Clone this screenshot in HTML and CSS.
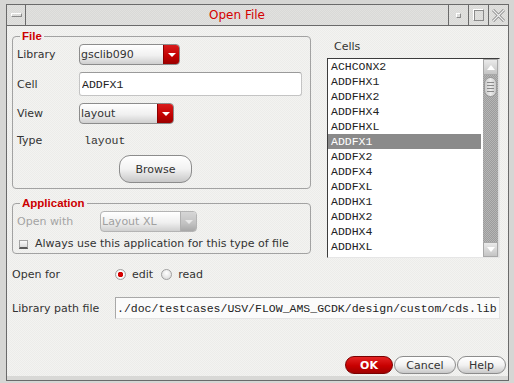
FILE: index.html
```html
<!DOCTYPE html>
<html lang="en">
<head>
    <meta charset="UTF-8"/>
    <title>Open File</title>
    <link rel="stylesheet" href="styles.css">
</head>
<body>

<div class="window">
    <div class="titlebar">
        <div class="tb-menu"><span class="tb-dash"></span></div>
        <div class="tb-title">Open File</div>
        <div class="tb-btn"><span class="tb-dot"></span></div>
        <div class="tb-btn"><span class="tb-square"></span></div>
        <div class="tb-btn">
            <svg width="13" height="13" viewBox="0 0 13 13">
                <path d="M1 1 L12 12 M12 1 L1 12" stroke="#8a8a8a" stroke-width="3" fill="none"/>
                <path d="M1 1 L12 12 M12 1 L1 12" stroke="#eeeeee" stroke-width="1.2" fill="none"/>
            </svg>
        </div>
    </div>

    <div class="content">
        <div class="main">
            <div class="left">
                <fieldset class="group file-group">
                    <legend>File</legend>
                    <div class="frow">
                        <span class="flabel">Library</span>
                        <div class="combo lib-combo">
                            <span class="combo-text">gsclib090</span>
                            <span class="combo-btn"></span>
                        </div>
                    </div>
                    <div class="frow cell-row">
                        <span class="flabel">Cell</span>
                        <input class="field cell-field" value="ADDFX1"/>
                    </div>
                    <div class="frow view-row">
                        <span class="flabel">View</span>
                        <div class="combo view-combo">
                            <span class="combo-text">layout</span>
                            <span class="combo-btn"></span>
                        </div>
                    </div>
                    <div class="frow type-row">
                        <span class="flabel">Type</span>
                        <span class="mono type-value">layout</span>
                    </div>
                    <button class="btn browse-btn">Browse</button>
                </fieldset>

                <fieldset class="group app-group">
                    <legend>Application</legend>
                    <div class="frow">
                        <span class="flabel app-label disabled">Open with</span>
                        <div class="combo app-combo off">
                            <span class="combo-text">Layout XL</span>
                            <span class="combo-btn"></span>
                        </div>
                    </div>
                    <div class="frow check-row">
                        <span class="check"></span>
                        <span>Always use this application for this type of file</span>
                    </div>
                </fieldset>
            </div>

            <div class="right">
                <div class="cells-label">Cells</div>
                <div class="list">
                    <div class="items" id="items"></div>
                    <div class="scrollbar">
                        <div class="sb-btn sb-up"><span class="arrow-up"></span></div>
                        <div class="sb-thumb"><span></span><span></span><span></span><span></span></div>
                        <div class="sb-track"></div>
                        <div class="sb-btn sb-down"><span class="arrow-down"></span></div>
                    </div>
                </div>
            </div>
        </div>

        <div class="open-for">
            <span class="olabel">Open for</span>
            <span class="radio on"></span><span class="radio-text">edit</span>
            <span class="radio"></span><span class="radio-text">read</span>
        </div>

        <div class="path-row">
            <span class="olabel">Library path file</span>
            <input class="field path-field" value="./doc/testcases/USV/FLOW_AMS_GCDK/design/custom/cds.lib"/>
        </div>

        <div class="buttons">
            <button class="btn ok-btn">OK</button>
            <button class="btn cancel-btn">Cancel</button>
            <button class="btn help-btn">Help</button>
        </div>
    </div>
</div>

<script>
    const cells = ["ACHCONX2", "ADDFHX1", "ADDFHX2", "ADDFHX4", "ADDFHXL", "ADDFX1",
      "ADDFX2", "ADDFX4", "ADDFXL", "ADDHX1", "ADDHX2", "ADDHX4", "ADDHXL"];

    // Fill the cell list, ADDFX1 is the current cell
    const list = document.getElementById("items");
    cells.forEach(name => {
      const row = document.createElement("div");
      row.className = "item" + (name === "ADDFX1" ? " sel" : "");
      row.textContent = name;
      list.appendChild(row);
    });
</script>

</body>
</html>
```

FILE: styles.css
```css
* {
  box-sizing: border-box;
}

body {
  margin: 0;
  width: 514px;
  height: 383px;
  overflow: hidden;
  background: #d6d6d4;
  font-family: "DejaVu Sans", sans-serif;
  font-size: 11px;
  color: #333333;
}

.window {
  margin: 4px 0 0 6px;
  width: 503px;
  height: 377px;
  border: 1px solid #6a6a6a;
  padding-bottom: 4px;
  display: flex;
  flex-direction: column;
  background: #d8d8d6;
}

/* title bar */

.titlebar {
  display: flex;
  height: 21px;
  border-bottom: 1px solid #6a6a6a;
  background: repeating-conic-gradient(#d9d9d7 0 25%, #e1e1df 0 50%) 0 0 / 2px 2px;
}

.tb-menu {
  width: 19px;
  border-right: 1px solid #6a6a6a;
  display: flex;
  align-items: center;
  justify-content: center;
}

.tb-dash {
  width: 11px;
  height: 4px;
  border: 1px solid #8a8a8a;
  border-top-color: #ffffff;
  border-left-color: #ffffff;
}

.tb-title {
  flex: 1;
  text-align: center;
  color: #d40000;
  font-size: 12px;
  line-height: 20px;
}

.tb-btn {
  width: 20px;
  border-left: 1px solid #6a6a6a;
  display: flex;
  align-items: center;
  justify-content: center;
}

.tb-dot {
  width: 5px;
  height: 5px;
  border: 1px solid #8a8a8a;
  border-top-color: #ffffff;
  border-left-color: #ffffff;
}

.tb-square {
  width: 11px;
  height: 12px;
  border: 1px solid #8a8a8a;
  border-top-color: #ffffff;
  border-left-color: #ffffff;
  box-shadow: inset 1px 1px 0 #8a8a8a;
}

/* content */

.content {
  flex: 1;
  display: flex;
  flex-direction: column;
  padding: 3px 2px 2px 5px;
  background: repeating-conic-gradient(#ececea 0 25%, #f3f3f1 0 50%) 0 0 / 2px 2px;
}

.main {
  display: grid;
  grid-template-columns: 299px 173px;
  column-gap: 16px;
  align-items: start;
}

.group {
  margin: 0;
  min-width: 0;
  border: 1px solid #a2a2a2;
  border-radius: 4px;
  padding: 1px 4px 5px;
}

.group legend {
  color: #cc0000;
  font: bold 11.5px "Liberation Sans", sans-serif;
  line-height: 14px;
  padding: 0 2px;
  margin-left: 3px;
}

.app-group {
  margin-top: 7px;
  padding-bottom: 3px;
}

.frow {
  display: flex;
  align-items: center;
}

.flabel {
  width: 62px;
  flex: none;
}

.app-label {
  width: 83px;
}

.disabled {
  color: #a4a4a4;
}

.cell-row,
.view-row {
  margin-top: 7px;
}

.type-row {
  margin-top: 8px;
  height: 16px;
}

.mono {
  font-family: "Liberation Mono", monospace;
  font-size: 11.5px;
}

.type-value {
  margin-left: 5px;
}

.check-row {
  margin-top: 4px;
  height: 14px;
}

.check {
  width: 9px;
  height: 9px;
  margin: 2px 7px 0 2px;
  border: 1px solid #a4a4a4;
  border-bottom: 2px solid #5a5a5a;
  background: linear-gradient(#fafafa, #dadada);
}

/* combo boxes */

.combo {
  height: 21px;
  display: flex;
  border: 1px solid #8c8c8c;
  border-radius: 4px;
  background: linear-gradient(#ffffff, #f0f0f0 55%, #cfcfcf);
  overflow: hidden;
}

.lib-combo {
  width: 101px;
}

.view-combo {
  width: 95px;
}

.app-combo {
  width: 97px;
  border-color: #b4b4b4;
}

.combo-text {
  flex: 1;
  padding-left: 1px;
  line-height: 19px;
}

.combo-btn {
  width: 16px;
  position: relative;
  background: linear-gradient(#d81c1c, #c20000 60%, #9a0000);
  border-left: 1px solid #8a0000;
}

.combo-btn::after {
  content: "";
  position: absolute;
  left: 4px;
  top: 8px;
  border-left: 4px solid transparent;
  border-right: 4px solid transparent;
  border-top: 4px solid #ffffff;
}

.off .combo-text {
  color: #a0a0a0;
}

.off .combo-btn {
  background: linear-gradient(#d6d6d6, #c2c2c2 60%, #a8a8a8);
  border-left-color: #b0b0b0;
}

.off .combo-btn::after {
  border-top-color: #e8e8e8;
}

/* text fields */

.field {
  margin: 0;
  padding: 0 2px;
  border: 1px solid #c4c4c4;
  border-top-color: #9a9a9a;
  border-radius: 3px;
  background: #ffffff;
  color: #222222;
  font-family: "Liberation Mono", monospace;
  font-size: 11.5px;
  outline: none;
}

.cell-field {
  width: 223px;
  height: 24px;
}

.path-field {
  width: 385px;
  height: 22px;
  padding-left: 1px;
  background: #fbfbfb;
  border-color: #a8a8a8 #e4e4e4 #e4e4e4 #a8a8a8;
  border-radius: 0;
}

/* buttons */

.btn {
  margin: 0;
  padding: 0;
  border: 1px solid #8c8c8c;
  border-radius: 9px;
  background: linear-gradient(#ffffff, #f2f2f2 50%, #c8c8c8);
  font-family: "DejaVu Sans", sans-serif;
  font-size: 11px;
  color: #333333;
}

.browse-btn {
  display: block;
  width: 73px;
  height: 28px;
  margin: 7px 0 0 102px;
  border-radius: 11px;
}

.ok-btn {
  width: 48px;
  color: #ffffff;
  font-weight: bold;
  border-color: #7a0000;
  background: linear-gradient(#e42424, #c80000 55%, #a00000);
}

.cancel-btn {
  width: 62px;
}

.help-btn {
  width: 49px;
}

/* cell list */

.cells-label {
  margin-top: 11px;
  padding-left: 7px;
  line-height: 14px;
}

.list {
  margin-top: 4px;
  height: 200px;
  display: flex;
  border: 1px solid;
  border-color: #3c3c3c #e6e6e6 #e6e6e6 #3c3c3c;
  background: #dedede;
  padding-right: 1px;
}

.items {
  flex: 1;
  background: #ffffff;
  font-family: "Liberation Mono", monospace;
  font-size: 11.5px;
  color: #222222;
}

.item {
  height: 15px;
  line-height: 15px;
  padding-left: 3px;
}

.item.sel {
  margin-right: 2px;
  color: #ffffff;
  background: #8a8a8a;
}

.scrollbar {
  width: 15px;
  display: flex;
  flex-direction: column;
  background: repeating-conic-gradient(#9c9c9c 0 25%, #b6b6b6 0 50%) 0 0 / 2px 2px;
}

.sb-btn {
  display: flex;
  align-items: center;
  justify-content: center;
  background: linear-gradient(#eaeaea, #c4c4c4);
  border: 1px solid #a8a8a8;
}

.sb-up {
  height: 16px;
}

.sb-down {
  height: 15px;
}

.arrow-up {
  border-left: 4px solid transparent;
  border-right: 4px solid transparent;
  border-bottom: 5px solid #ffffff;
}

.arrow-down {
  border-left: 4px solid transparent;
  border-right: 4px solid transparent;
  border-top: 5px solid #ffffff;
}

.sb-thumb {
  height: 20px;
  margin: 2px 1px 0;
  border: 1px solid #9a9a9a;
  border-radius: 7px;
  background: linear-gradient(90deg, #c8c8c8, #ececec 50%, #c8c8c8);
  display: flex;
  flex-direction: column;
  justify-content: center;
  align-items: center;
  gap: 2px;
}

.sb-thumb span {
  width: 7px;
  height: 1px;
  background: #8a8a8a;
}

.sb-track {
  flex: 1;
}

/* bottom rows */

.open-for {
  display: flex;
  align-items: center;
  height: 16px;
  margin-top: 8px;
}

.olabel {
  width: 103px;
  flex: none;
}

.radio {
  width: 11px;
  height: 11px;
  margin-right: 6px;
  border: 1px solid #a0a0a0;
  border-radius: 50%;
  background: radial-gradient(circle at 50% 35%, #ffffff, #d4d4d4);
}

.radio.on {
  background: radial-gradient(circle, #d40000 0 2.5px, #ffffff 3px, #d4d4d4);
}

.radio-text {
  margin-right: 8px;
}

.path-row {
  display: flex;
  align-items: center;
  margin-top: 15px;
}

.buttons {
  margin-top: auto;
  display: flex;
  justify-content: flex-end;
  gap: 1px;
  height: 18px;
}
```
